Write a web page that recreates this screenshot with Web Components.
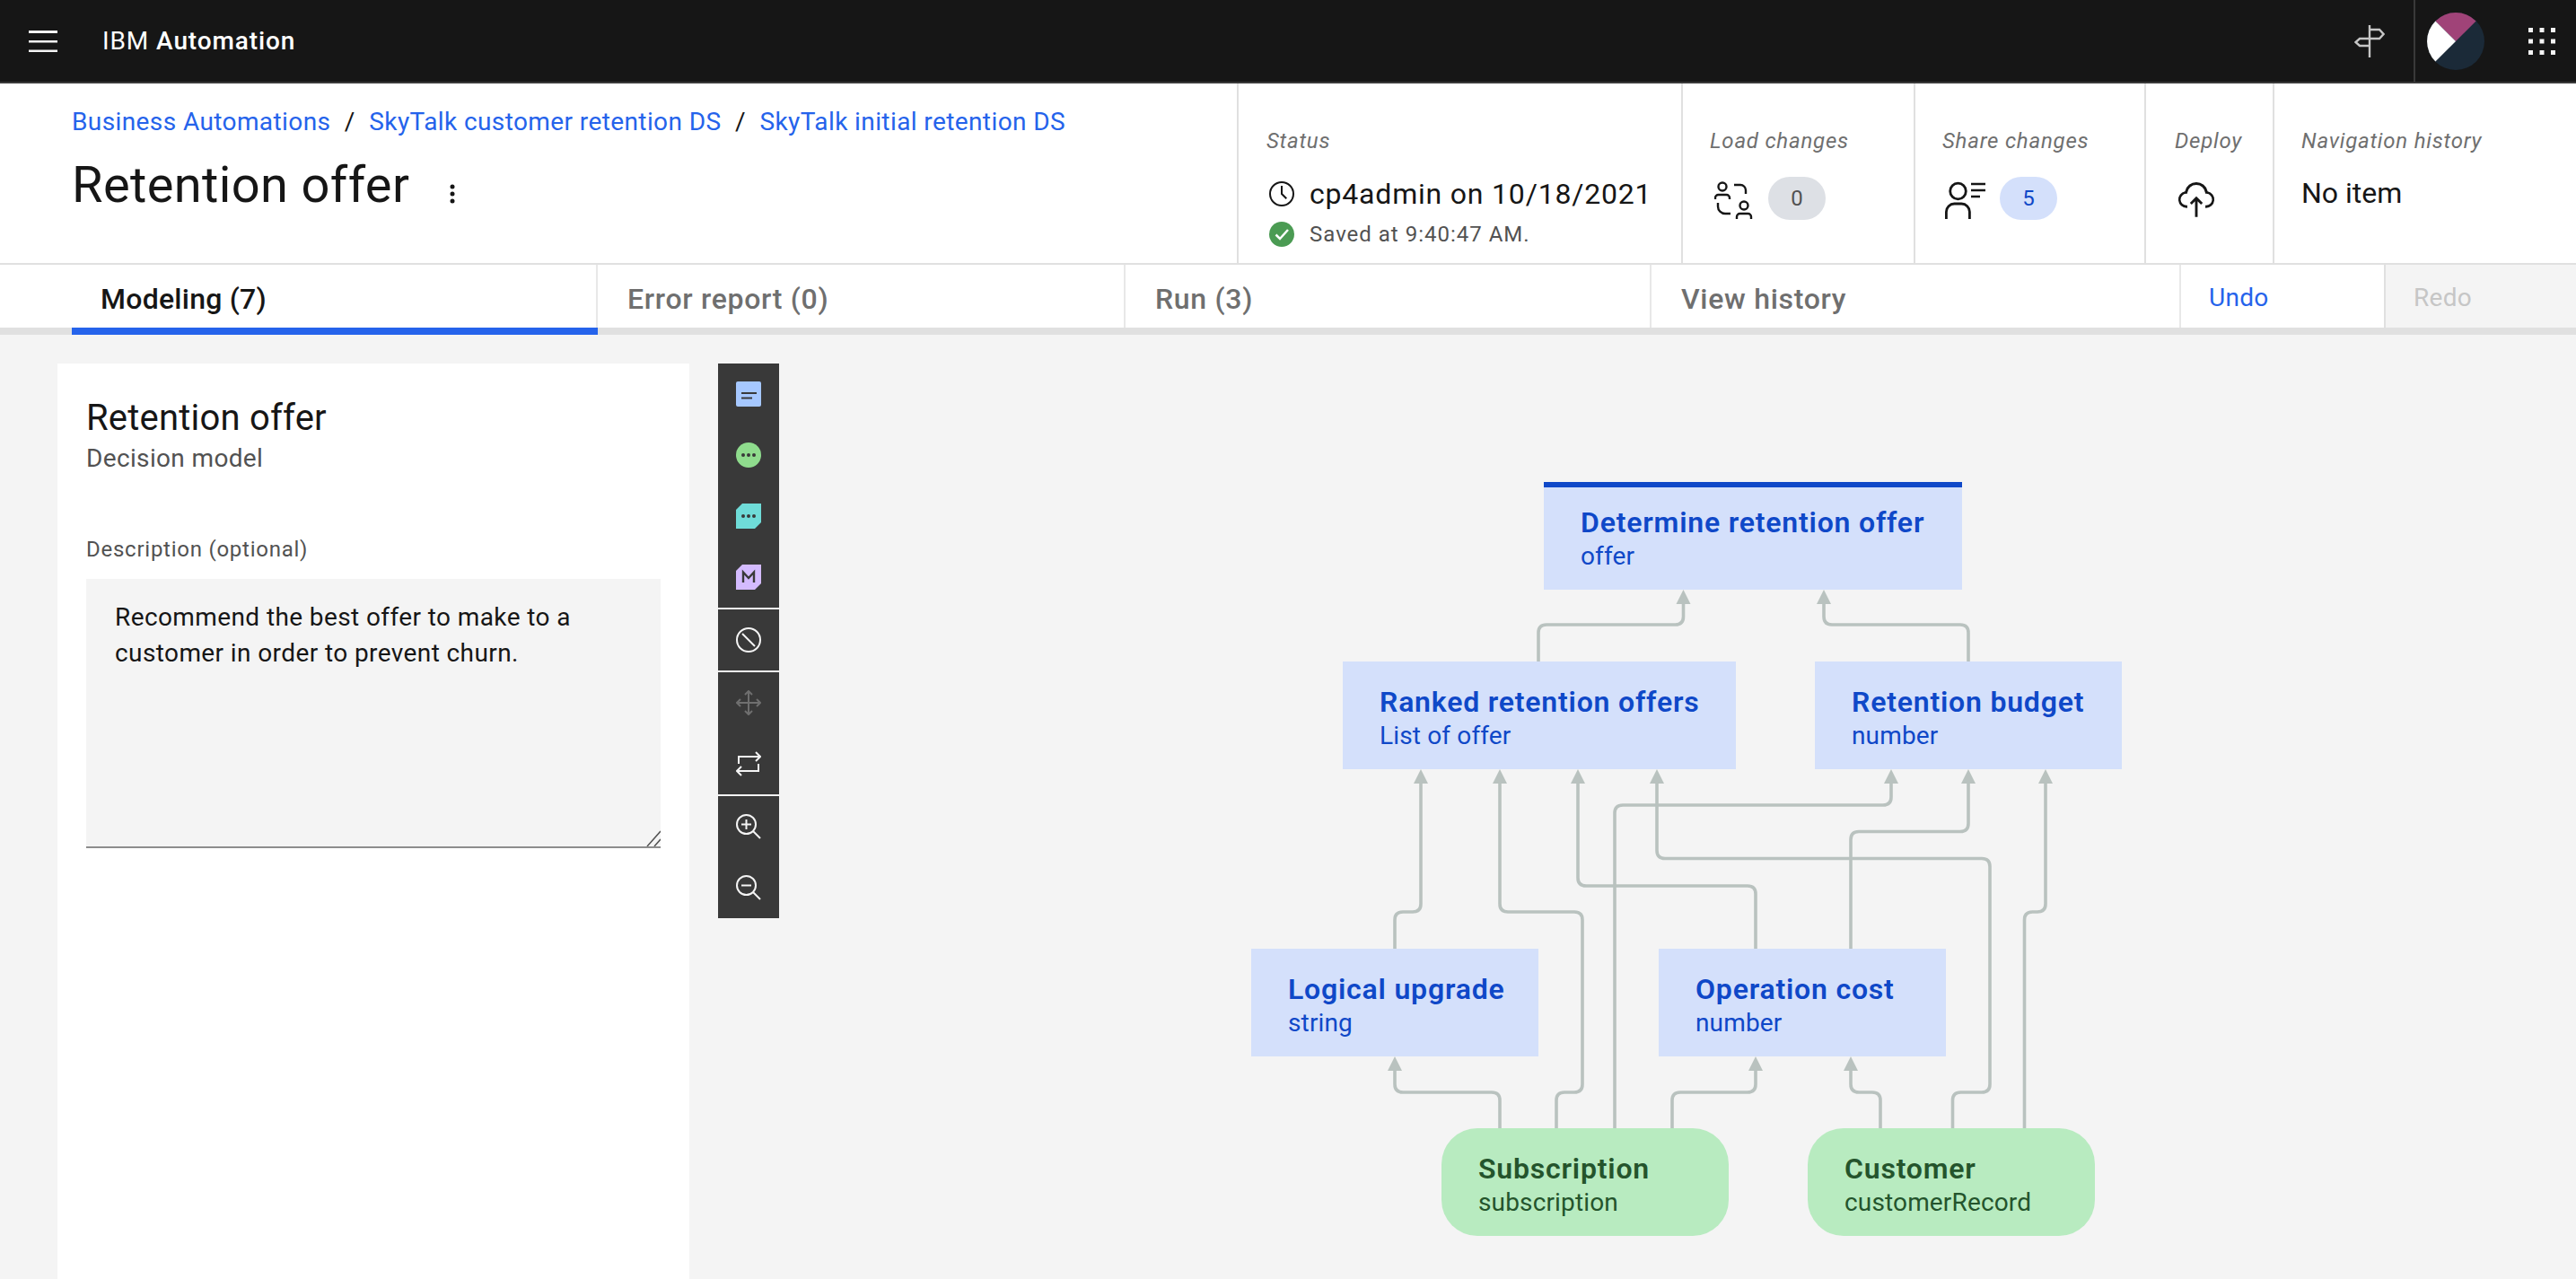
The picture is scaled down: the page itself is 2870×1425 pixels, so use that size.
<!DOCTYPE html>
<html lang="en">
<head>
<meta charset="utf-8">
<title>Retention offer</title>
<style>
  html, body { margin: 0; height: 100%; overflow: hidden; }
  body { font-family: Roboto, "Noto Sans", sans-serif; color: #161616; background: #f4f4f4; }
  app-shell { height: 1425px; }
</style>
</head>
<body>
<app-shell>
  <top-bar></top-bar>
  <page-header></page-header>
  <tab-bar></tab-bar>
  <work-area>
    <side-panel></side-panel>
    <tool-strip></tool-strip>
    <model-canvas>
      <dm-node x="1720" y="537" w="466" selected name="Determine retention offer" type="offer"></dm-node>
      <dm-node x="1496" y="737" w="438" name="Ranked retention offers" type="List of offer"></dm-node>
      <dm-node x="2022" y="737" w="342" name="Retention budget" type="number"></dm-node>
      <dm-node x="1394" y="1057" w="320" name="Logical upgrade" type="string"></dm-node>
      <dm-node x="1848" y="1057" w="320" name="Operation cost" type="number"></dm-node>
      <dm-node x="1606" y="1257" w="320" kind="input" name="Subscription" type="subscription"></dm-node>
      <dm-node x="2014" y="1257" w="320" kind="input" name="Customer" type="customerRecord"></dm-node>
    </model-canvas>
  </work-area>
</app-shell>

<script>
// plain helper, every component below has its own shadow root
function shadow(el, html) {
    el.attachShadow({ mode: 'open' });
    el.shadowRoot.innerHTML = html;
}

class AppShell extends HTMLElement {
    constructor() {
        super();
        shadow(this, `
        <style>
            :host { display: flex; flex-direction: column; width: 100%; }
        </style>
        <slot></slot>`);
    }
}

class TopBar extends HTMLElement {
    constructor() {
        super();
        shadow(this, `
        <style>
            :host { display: flex; align-items: center; height: 91px; flex: none; background: #161616; border-bottom: 2px solid #393939; color: #fff; }
            .menu { display: block; margin-left: 32px; }
            .name { margin-left: 50px; font-size: 28px; letter-spacing: .9px; }
            .name b { font-weight: 500; }
            .spacer { flex: 1; }
            .sign { display: block; margin-right: 32px; }
            .user { display: flex; align-items: center; height: 91px; border-left: 2px solid #393939; padding-left: 13px; }
            .dots { display: block; margin: 0 23px 0 49px; }
        </style>
        <svg class="menu" width="32" height="24" viewBox="0 0 32 24" fill="#f4f4f4"><rect y="0" width="32" height="3"/><rect y="11" width="32" height="2.5"/><rect y="21.5" width="32" height="2.5"/></svg>
        <span class="name">IBM <b>Automation</b></span>
        <span class="spacer"></span>
        <svg class="sign" width="34" height="36" viewBox="0 0 34 36" fill="none" stroke="#c6c6c6" stroke-width="2.4"><path d="M17 0v36"/><path d="M17 5h11l4.500 5-4.500 5H17"/><path d="M17 15H6l-4.500 4L6 23h11"/></svg>
        <div class="user">
            <svg width="64" height="64" viewBox="0 0 64 64"><circle cx="32" cy="32" r="32" fill="#1b2a38"/><path d="M32 32L9.400 9.400A32 32 0 0 1 54.600 9.400Z" fill="#a04378"/><path d="M32 32L9.400 54.600A32 32 0 0 1 9.400 9.400Z" fill="#fff"/></svg>
        </div>
        <svg class="dots" width="30" height="30" viewBox="0 0 30 30" fill="#f4f4f4"><rect width="5" height="5"/><rect x="12.500" width="5" height="5"/><rect x="25" width="5" height="5"/><rect y="12.500" width="5" height="5"/><rect x="12.500" y="12.500" width="5" height="5"/><rect x="25" y="12.500" width="5" height="5"/><rect y="25" width="5" height="5"/><rect x="12.500" y="25" width="5" height="5"/><rect x="25" y="25" width="5" height="5"/></svg>`);
    }
}

class PageHeader extends HTMLElement {
    constructor() {
        super();
        shadow(this, `
        <style>
            :host { display: flex; height: 200px; flex: none; background: #fff; border-bottom: 2px solid #e0e0e0; }
            .left { width: 1298px; padding: 25px 0 0 80px; }
            .crumbs { display: flex; font-size: 28px; line-height: 36px; color: #161616; letter-spacing: .4px; }
            .crumbs a { color: #2563eb; }
            .crumbs i { font-style: normal; width: 43px; text-align: center; }
            h1 { margin: 17px 0 0; font-size: 56px; line-height: 70px; font-weight: 400; display: flex; align-items: center; letter-spacing: .37px; }
            h1 svg { display: block; margin: 20px 0 0 45px; }
            .cell { border-left: 2px solid #e0e0e0; padding: 44px 0 0 30px; box-sizing: border-box; }
            .label { font-size: 24px; line-height: 40px; font-style: italic; color: #6f6f6f; letter-spacing: .78px; }
            .row { display: flex; align-items: center; margin-top: 20px; }
            .status { display: flex; align-items: center; font-size: 32px; line-height: 40px; margin-top: 19px; letter-spacing: .8px; }
            .status svg, .saved svg { display: block; margin-left: 3px; margin-right: 17px; }
            .saved { display: flex; align-items: center; font-size: 24px; line-height: 32px; color: #525252; margin-top: 9px; letter-spacing: 1px; }
            .pill { width: 64px; height: 48px; border-radius: 24px; font-size: 24px; line-height: 48px; text-align: center; }
            .text { font-size: 32px; line-height: 40px; margin-top: 18px; }
        </style>
        <div class="left">
            <div class="crumbs"><a>Business Automations</a><i>/</i><a>SkyTalk customer retention DS</a><i>/</i><a>SkyTalk initial retention DS</a></div>
            <h1>Retention offer<svg width="6" height="22" viewBox="0 0 6 22" fill="#161616"><circle cx="3" cy="3" r="2.500"/><circle cx="3" cy="11" r="2.500"/><circle cx="3" cy="19" r="2.500"/></svg></h1>
        </div>
        <div class="cell" style="width:495px;padding-left:31px">
            <div class="label">Status</div>
            <div class="status"><svg width="28" height="30" viewBox="2 2 28 28" fill="#161616"><path d="M16,30A14,14,0,1,1,30,16,14,14,0,0,1,16,30ZM16,4A12,12,0,1,0,28,16,12,12,0,0,0,16,4Z"/><path d="M20.590 22L15 16.410V7h2v8.580l5 5.010L20.590 22z"/></svg>cp4admin on 10/18/2021</div>
            <div class="saved"><svg width="28" height="28" viewBox="0 0 28 28"><circle cx="14" cy="14" r="14" fill="#4b9b53"/><path d="M7.500 14.500l4.500 4.500 9-10" fill="none" stroke="#fff" stroke-width="2.500"/></svg>Saved at 9:40:47 AM.</div>
        </div>
        <div class="cell" style="width:259px">
            <div class="label">Load changes</div>
            <div class="row">
                <svg style="display:block;margin:3px 17px 0 5px" width="43" height="42" viewBox="0 0 43 42" fill="none" stroke="#161616" stroke-width="2.400"><circle cx="9" cy="6" r="4.500"/><path d="M1 20v-1.500A3.500 3.500 0 0 1 4.500 15h9a3.500 3.500 0 0 1 3.500 3.500V20"/><circle cx="33" cy="27" r="4.500"/><path d="M25 42v-2.500a3.500 3.500 0 0 1 3.500-3.500h9a3.500 3.500 0 0 1 3.500 3.500V42"/><path d="M22 4h7a6 6 0 0 1 6 6v4"/><path d="M4 24v4a8 8 0 0 0 8 8h6"/></svg>
                <div class="pill" style="background:#dde0e5;color:#525252">0</div>
            </div>
        </div>
        <div class="cell" style="width:257px">
            <div class="label">Share changes</div>
            <div class="row">
                <svg style="display:block;margin:3px 16px 0 3px" width="45" height="42" viewBox="0 0 45 42" fill="none" stroke="#161616" stroke-width="2.800"><circle cx="14.500" cy="11" r="8.800"/><path d="M1.400 42v-8a9 9 0 0 1 9-9h8a9 9 0 0 1 9 9v8"/><path d="M29 3h16M29 10h16M29 17h10" stroke-width="2.600"/></svg>
                <div class="pill" style="background:#d4e0fb;color:#0f48c8">5</div>
            </div>
        </div>
        <div class="cell" style="width:143px;padding-left:32px">
            <div class="label">Deploy</div>
            <div class="row"><svg style="display:block;margin:3px 0 0 1px" width="46" height="46" viewBox="0 0 32 32" fill="#161616"><path d="M11 18l1.410 1.410L15 16.830V29h2V16.830l2.590 2.580L21 18l-5-5-5 5z"/><path d="M23.500 22H23v-2h.5a4.500 4.500 0 0 0 .36-9H23l-.1-.82a7 7 0 0 0-13.880 0L9 11h-.86a4.500 4.500 0 0 0 .36 9H9v2h-.5A6.500 6.500 0 0 1 7.200 9.140a9 9 0 0 1 17.600 0A6.500 6.500 0 0 1 23.500 22z"/></svg></div>
        </div>
        <div class="cell" style="flex:1">
            <div class="label">Navigation history</div>
            <div class="text">No item</div>
        </div>`);
    }
}

class TabBar extends HTMLElement {
    constructor() {
        super();
        shadow(this, `
        <style>
            :host { display: flex; height: 70px; flex: none; background: #fff; border-bottom: 8px solid #e0e0e0; font-size: 32px; font-weight: 500; color: #6f6f6f; letter-spacing: .7px; }
            .tab { position: relative; display: flex; align-items: center; box-sizing: border-box; border-right: 2px solid #e8e8e8; padding-left: 33px; padding-top: 6px; }
            .on { margin-left: 80px; color: #161616; padding-left: 32px; letter-spacing: .25px; }
            .on::after { content: ""; position: absolute; left: 0; right: -2px; bottom: -8px; height: 8px; background: #2563eb; }
            .act { display: flex; align-items: center; font-size: 28px; font-weight: 400; padding: 2px 0 0 31px; box-sizing: border-box; letter-spacing: .3px; }
        </style>
        <div class="tab on" style="width:586px">Modeling (7)</div>
        <div class="tab" style="width:588px">Error report (0)</div>
        <div class="tab" style="width:586px">Run (3)</div>
        <div class="tab" style="width:590px">View history</div>
        <div class="act" style="width:228px;color:#2563eb;border-right:2px solid #e0e0e0">Undo</div>
        <div class="act" style="flex:1;color:#c6c6c6;background:#f4f4f4">Redo</div>`);
    }
}

class WorkArea extends HTMLElement {
    constructor() {
        super();
        shadow(this, `
        <style>
            :host { display: flex; flex: 1; min-height: 0; padding: 32px 0 0 64px; background: #f4f4f4; box-sizing: border-box; overflow: hidden; }
        </style>
        <slot></slot>`);
    }
}

class SidePanel extends HTMLElement {
    constructor() {
        super();
        shadow(this, `
        <style>
            :host { display: block; flex: none; width: 704px; box-sizing: border-box; padding: 37px 32px 0; background: #fff; margin-right: 32px; }
            h2 { margin: 0; font-size: 40px; line-height: 48px; font-weight: 400; letter-spacing: .2px; }
            .kind { font-size: 28px; line-height: 36px; color: #525252; margin-top: 3px; letter-spacing: .35px; }
            label { display: block; margin-top: 67px; font-size: 24px; line-height: 32px; color: #525252; letter-spacing: .75px; }
            .box { margin-top: 17px; position: relative; background: #f4f4f4; border-bottom: 2px solid #8d8d8d; padding: 23px 32px 0; font-size: 28px; line-height: 40px; box-sizing: border-box; height: 300px; letter-spacing: .4px; }
            svg { position: absolute; right: 0; bottom: 0; display: block; }
        </style>
        <h2>Retention offer</h2>
        <div class="kind">Decision model</div>
        <label>Description (optional)</label>
        <div class="box">Recommend the best offer to make to a customer in order to prevent churn.
            <svg width="16" height="18" viewBox="0 0 16 18" fill="none" stroke="#525252" stroke-width="1.500"><path d="M1 18L16 1M9 18l7-8"/></svg>
        </div>`);
    }
}

const toolIcons = {
    note: '<rect width="28" height="28" rx="2" fill="#a6c8ff"/><path d="M6 13h17M6 18.500h12" stroke="#393939" stroke-width="2"/>',
    decision: '<ellipse cx="14" cy="14" rx="14" ry="14" fill="#8fdc8d"/><circle cx="8" cy="14" r="2" fill="#393939"/><circle cx="14" cy="14" r="2" fill="#393939"/><circle cx="20" cy="14" r="2" fill="#393939"/>',
    know: '<path d="M7 0H28V21L21 28H0V7Z" fill="#6fdcd8"/><circle cx="8" cy="14" r="2" fill="#393939"/><circle cx="14" cy="14" r="2" fill="#393939"/><circle cx="20" cy="14" r="2" fill="#393939"/>',
    model: '<path d="M7 0H28V21L21 28H0V7Z" fill="#d4bbff"/><path d="M8 20V8.500L14 15l6-6.500V20" fill="none" stroke="#393939" stroke-width="2.400"/>',
    block: '<g fill="none" stroke="#f4f4f4" stroke-width="2"><circle cx="14" cy="14" r="13"/><path d="M7 7l14 14"/></g>',
    move: '<g fill="none" stroke="#6f6f6f" stroke-width="2"><path d="M14 1v26M1 14h26M10 5l4-4 4 4M10 23l4 4 4-4M5 10l-4 4 4 4M23 10l4 4-4 4"/></g>',
    swap: '<g fill="none" stroke="#f4f4f4" stroke-width="2"><path d="M3 14V6h24M22 1l5 5-5 5M25 14v8H1M6 17l-5 5 5 5"/></g>',
    zoomin: '<g fill="none" stroke="#f4f4f4" stroke-width="2"><circle cx="11.500" cy="11.500" r="10.500"/><path d="M19 19l8 8M6 11.500h11M11.500 6v11"/></g>',
    zoomout: '<g fill="none" stroke="#f4f4f4" stroke-width="2"><circle cx="11.500" cy="11.500" r="10.500"/><path d="M19 19l8 8M6 11.500h11"/></g>'
};

class ToolStrip extends HTMLElement {
    constructor() {
        super();
        const group = names => '<div class="group">' + names.map(n =>
            `<div class="btn"><svg width="28" height="28" viewBox="0 0 28 28">${toolIcons[n]}</svg></div>`).join('') + '</div>';
        shadow(this, `
        <style>
            :host { display: flex; flex-direction: column; gap: 2px; flex: none; width: 68px; align-self: flex-start; }
            .group { background: #393939; }
            .btn { display: flex; align-items: center; justify-content: center; height: 68px; }
            svg { display: block; }
        </style>
        ${group(['note', 'decision', 'know', 'model'])}
        ${group(['block'])}
        ${group(['move', 'swap'])}
        ${group(['zoomin', 'zoomout'])}`);
    }
}

// canvas origin on the page, node and edge coordinates below are page pixels
const ORIGIN_X = 868;
const ORIGIN_Y = 373;

// edge routes, last point is the arrow tip
const edges = [
    [[1714, 737], [1714, 696], [1875.5, 696], [1875.5, 657]],
    [[2193, 737], [2193, 696], [2032, 696], [2032, 657]],
    [[1554, 1057], [1554, 1016], [1583, 1016], [1583, 857]],
    [[1671, 1257], [1671, 1217], [1554, 1217], [1554, 1177]],
    [[1734, 1257], [1734, 1217], [1763, 1217], [1763, 1016], [1671, 1016], [1671, 857]],
    [[1799, 1257], [1799, 897], [2107, 897], [2107, 857]],
    [[1863, 1257], [1863, 1217], [1956, 1217], [1956, 1177]],
    [[1956, 1057], [1956, 987], [1758, 987], [1758, 857]],
    [[2062, 1057], [2062, 926.500], [2193, 926.500], [2193, 857]],
    [[2095, 1257], [2095, 1217], [2062, 1217], [2062, 1177]],
    [[2175.500, 1257], [2175.500, 1217], [2217, 1217], [2217, 956.500], [1846, 956.500], [1846, 857]],
    [[2255.500, 1257], [2255.500, 1016], [2279, 1016], [2279, 857]]
];

function edgePath(points) {
    const r = 9;
    const pts = points.map(p => [p[0] - ORIGIN_X, p[1] - ORIGIN_Y]);
    let d = `M${pts[0][0]} ${pts[0][1]}`;
    for (let i = 1; i < pts.length - 1; i++) {
        const [x, y] = pts[i];
        const [px, py] = pts[i - 1];
        const [nx, ny] = pts[i + 1];
        const ax = x - Math.sign(x - px) * r, ay = y - Math.sign(y - py) * r;
        const bx = x + Math.sign(nx - x) * r, by = y + Math.sign(ny - y) * r;
        d += `L${ax} ${ay}Q${x} ${y} ${bx} ${by}`;
    }
    const tip = pts[pts.length - 1];
    d += `L${tip[0]} ${tip[1] + 10}`;
    return d;
}

function arrowHead(points) {
    const [x, y] = points[points.length - 1];
    const px = x - ORIGIN_X, py = y - ORIGIN_Y;
    return `${px},${py} ${px - 8},${py + 16} ${px + 8},${py + 16}`;
}

class ModelCanvas extends HTMLElement {
    constructor() {
        super();
        const lines = edges.map(e => `<path d="${edgePath(e)}"/><polygon points="${arrowHead(e)}"/>`).join('');
        shadow(this, `
        <style>
            :host { display: block; position: absolute; left: ${ORIGIN_X}px; top: ${ORIGIN_Y}px; right: 0; bottom: 0; overflow: hidden; }
            svg { position: absolute; left: 0; top: 0; display: block; }
            path { fill: none; stroke: #b9c2bf; stroke-width: 3.6; }
            polygon { fill: #b9c2bf; }
        </style>
        <svg width="2002" height="1052">${lines}</svg>
        <slot></slot>`);
    }
}

class DmNode extends HTMLElement {
    constructor() {
        super();
        const input = this.getAttribute('kind') === 'input';
        const selected = this.hasAttribute('selected');
        shadow(this, `
        <style>
            :host { display: block; position: absolute; box-sizing: border-box; height: 120px; padding: 25px 0 0 41px;
                left: ${this.getAttribute('x') - ORIGIN_X}px; top: ${this.getAttribute('y') - ORIGIN_Y}px; width: ${this.getAttribute('w')}px;
                background: ${input ? '#b8ebc0' : '#d4e0fb'}; color: ${input ? '#24542c' : '#0f48c8'};
                border-radius: ${input ? '40px' : '0'}; ${selected ? 'border-top: 6px solid #0f48c8; padding-top: 19px;' : ''} }
            .name { font-size: 32px; line-height: 40px; font-weight: 600; white-space: nowrap; letter-spacing: .8px; }
            .type { font-size: 28px; line-height: 36px; white-space: nowrap; letter-spacing: .15px; }
        </style>
        <div class="name">${this.getAttribute('name')}</div>
        <div class="type">${this.getAttribute('type')}</div>`);
    }
}

customElements.define('app-shell', AppShell);
customElements.define('top-bar', TopBar);
customElements.define('page-header', PageHeader);
customElements.define('tab-bar', TabBar);
customElements.define('work-area', WorkArea);
customElements.define('side-panel', SidePanel);
customElements.define('tool-strip', ToolStrip);
customElements.define('model-canvas', ModelCanvas);
customElements.define('dm-node', DmNode);
</script>
</body>
</html>
